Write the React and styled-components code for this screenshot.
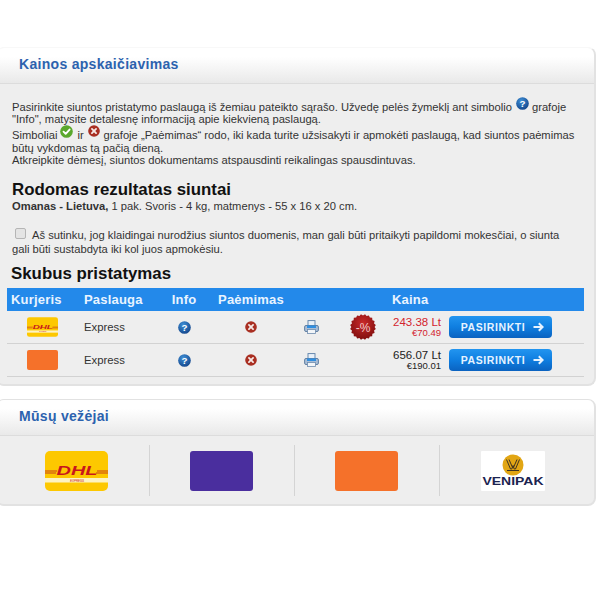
import React from "react";
import styled, { createGlobalStyle } from "styled-components";

const Global = createGlobalStyle`
  html, body { margin: 0; padding: 0; background: #fff; }
  body { font-family: "Liberation Sans", Arial, sans-serif; color: #333; }
`;

const Page = styled.div`
  width: 600px;
  height: 600px;
  overflow: hidden;
  padding-top: 47px;
  box-sizing: border-box;
  display: flex;
  flex-direction: column;
  gap: 13px;
`;

const Panel = styled.section`
  flex: none;
  width: 600px;
  margin-left: -4px;
  box-sizing: border-box;
  border: 1px solid ${p => (p.$faint ? "#f8f8f8" : "#e2e2e2")};
  border-right: 2px solid #e2e2e2;
  border-bottom: 2px solid #e2e2e2;
  border-radius: 8px;
  overflow: hidden;
  background: #eee;
`;

const PanelHeader = styled.header`
  height: 36px;
  box-sizing: border-box;
  padding: 0 0 4px 22px;
  display: flex;
  align-items: center;
  background: linear-gradient(to bottom, #fff 0%, #fff 25%, #e9e9e9 100%);
  border-bottom: 1px solid #dcdcdc;
`;

const PanelTitle = styled.h2`
  margin: 0;
  font-size: 14px;
  font-weight: bold;
  letter-spacing: 0.3px;
  color: #2c62ae;
`;

const Body = styled.div`
  padding: 15px 11px 7px 10px;
`;

const Intro = styled.div`
  padding-left: 5px;
  font-size: 11.2px;
`;

const IconLine = styled.div`
  height: ${p => p.$h}px;
  line-height: 12px;
  display: flex;
  align-items: flex-end;
  white-space: pre;
`;

const InlineIcon = styled.svg`
  display: inline-block;
  flex: none;
  width: ${p => p.$s}px;
  height: ${p => p.$s}px;
  margin: 0 ${p => p.$mr}px ${p => p.$up}px ${p => p.$ml}px;
`;

const ResultTitle = styled.h3`
  margin: ${p => p.$mt}px 0 0 ${p => p.$ml}px;
  font-size: 16.85px;
  line-height: 20px;
  font-weight: bold;
  color: #111;
`;

const Route = styled.p`
  margin: 0 0 0 5px;
  font-size: 11.2px;
  line-height: 13px;
  b { color: #333; }
`;

const Consent = styled.label`
  display: block;
  margin: 15px 0 0 5px;
  font-size: 11.2px;
  line-height: 13.5px;
`;

const Check = styled.span`
  display: inline-block;
  width: 9px;
  height: 9px;
  margin: 0 6px 0 3px;
  border: 1px solid #b5b5b5;
  border-radius: 2px;
  background: #e4e4e4;
`;

const Table = styled.div`
  margin: 4px 0 0 0;
  width: 577px;
`;

const columns = "70px 81px 52px 82px 38px 66px 47px 141px";

const HeadRow = styled.div`
  display: grid;
  grid-template-columns: ${columns};
  height: 23px;
  align-items: center;
  background: #2389ea;
  color: #e9f4ff;
  font-size: 13px;
  font-weight: bold;
  letter-spacing: 0.2px;
`;

const HeadCell = styled.div`
  grid-column: ${p => p.$col || "auto"};
  text-align: ${p => p.$align || "left"};
  padding-left: ${p => p.$pl || 0}px;
`;

const Row = styled.div`
  display: grid;
  grid-template-columns: ${columns};
  height: 33px;
  box-sizing: border-box;
  align-items: center;
  border-bottom: 1px solid #d2d2d2;
  font-size: 11.3px;
`;

const Center = styled.div`
  display: flex;
  justify-content: center;
  align-items: center;
`;

const Service = styled.div`
  padding-left: 7px;
  color: #333;
`;

const Price = styled.div`
  display: flex;
  flex-direction: column;
  align-items: flex-end;
  white-space: nowrap;
  margin-right: 2px;
  color: ${p => (p.$sale ? "#d3242f" : "#222")};
  font-size: 11.5px;
  line-height: 12px;
  small { font-size: 9.5px; line-height: 10px; }
`;

const PickButton = styled.button`
  margin-left: 6px;
  width: 103px;
  height: 22px;
  padding: 0 0 0 4px;
  border: 0;
  border-radius: 4px;
  background: linear-gradient(to bottom, #2295f0 0%, #0f7ee0 50%, #0a62c0 100%);
  color: #e6f3ff;
  font: bold 10.5px "Liberation Sans", Arial, sans-serif;
  letter-spacing: 0.6px;
  display: flex;
  align-items: center;
  justify-content: center;
  gap: 8px;
`;

const Carriers = styled.div`
  display: grid;
  grid-template-columns: repeat(4, 145px);
  padding: 9px 0 8px 8px;
`;

const Carrier = styled.div`
  height: 51px;
  box-sizing: border-box;
  display: flex;
  align-items: center;
  justify-content: center;
  padding-right: ${p => (p.$last ? 0 : 2)}px;
  border-right: ${p => (p.$last ? "0" : "1px solid #d4d4d4")};
`;

const Swatch = styled.div`
  width: ${p => p.$w}px;
  height: ${p => p.$h}px;
  border-radius: ${p => p.$r}px;
  background: ${p => p.$c};
`;

const Help = ({ s, ml, mr, up }) => (
  <InlineIcon $s={s} $ml={ml} $mr={mr} $up={up} viewBox="0 0 14 14">
    <defs>
      <radialGradient id="hb" cx="40%" cy="30%" r="80%">
        <stop offset="0" stopColor="#3f8fd6" />
        <stop offset="1" stopColor="#0f3f85" />
      </radialGradient>
    </defs>
    <circle cx="7" cy="7" r="6.8" fill="url(#hb)" />
    <text x="7" y="10.8" textAnchor="middle" fontSize="10.5" fontWeight="bold" fontFamily="Liberation Sans" fill="#fff">?</text>
  </InlineIcon>
);

const Cross = ({ s, ml, mr, up }) => (
  <InlineIcon $s={s} $ml={ml} $mr={mr} $up={up} viewBox="0 0 14 14">
    <circle cx="7" cy="7" r="6.8" fill="#a92f22" />
    <path d="M4.6 4.6 9.4 9.4M9.4 4.6 4.6 9.4" stroke="#f6e9e6" strokeWidth="2.1" strokeLinecap="round" />
  </InlineIcon>
);

const Tick = () => (
  <InlineIcon $s={13} $ml={3} $mr={4} $up={3} viewBox="0 0 14 14">
    <circle cx="7" cy="7" r="6.8" fill="#5aa82c" />
    <path d="M3.8 7.2 6.1 9.5 10.3 4.9" fill="none" stroke="#fff" strokeWidth="2" strokeLinecap="round" strokeLinejoin="round" />
  </InlineIcon>
);

const PrinterIcon = styled.svg`
  width: 15px;
  height: 14px;
`;

const Printer = () => (
  <PrinterIcon viewBox="0 0 15 14">
    <rect x="4" y="0.6" width="7" height="5.5" fill="#e8f0f8" stroke="#5b7fa8" strokeWidth="0.9" />
    <rect x="0.6" y="5.5" width="13.8" height="6" rx="1.4" fill="#a9bdd5" stroke="#56769c" strokeWidth="0.9" />
    <rect x="3" y="5.5" width="9" height="2.5" fill="#2f8ee0" />
    <rect x="3.5" y="9.5" width="8" height="4" fill="#f2f5f8" stroke="#6f8cae" strokeWidth="0.8" />
  </PrinterIcon>
);

const burst = (() => {
  const pts = [];
  for (let i = 0; i < 40; i++) {
    const r = i % 2 ? 13 : 11.6;
    const a = (i * Math.PI) / 20;
    pts.push(`${(13 + r * Math.cos(a)).toFixed(2)},${(13 + r * Math.sin(a)).toFixed(2)}`);
  }
  return pts.join(" ");
})();

const BadgeIcon = styled.svg`
  width: 26px;
  height: 26px;
`;

const Badge = () => (
  <BadgeIcon viewBox="0 0 26 26">
    <defs>
      <radialGradient id="bd" cx="50%" cy="35%" r="70%">
        <stop offset="0" stopColor="#c92a2a" />
        <stop offset="1" stopColor="#7a0b0b" />
      </radialGradient>
    </defs>
    <polygon points={burst} fill="url(#bd)" />
    <text x="13" y="17.5" textAnchor="middle" fontSize="12" fontFamily="Liberation Sans" fill="#f3c9c9">-%</text>
  </BadgeIcon>
);

const Arrow = () => (
  <svg width="11" height="10" viewBox="0 0 11 10">
    <path d="M0.5 5H9M5.8 1.2 9.6 5 5.8 8.8" fill="none" stroke="#e6f3ff" strokeWidth="2" />
  </svg>
);

const LogoSvg = styled.svg`
  display: block;
  width: ${p => p.$w}px;
  height: ${p => p.$h}px;
`;

const Dhl = ({ w, h }) => (
  <LogoSvg $w={w} $h={h} viewBox="0 0 63 40">
    <rect width="63" height="40" rx="5" fill="#fdc800" />
    <rect x="0" y="27" width="63" height="4.5" fill="#fdf3c2" />
    <path d="M0 19.5H12V20.5H0ZM0 21.5H11V22.5H0ZM52 19.5H63V20.5H52ZM51 21.5H63V22.5H51Z" fill="#c8401a" />
    <text x="32" y="24" textAnchor="middle" fontSize="12" fontWeight="bold" fontStyle="italic" textLength="41" lengthAdjust="spacingAndGlyphs" fontFamily="Liberation Sans" fill="#c8161d">DHL</text>
    <text x="32" y="30.6" textAnchor="middle" fontSize="3" fontStyle="italic" fontFamily="Liberation Sans" fill="#c8161d">EXPRESS</text>
  </LogoSvg>
);

const Venipak = () => (
  <LogoSvg $w={64} $h={40} viewBox="0 0 64 40">
    <rect width="64" height="40" rx="1" fill="#fff" />
    <circle cx="32" cy="14" r="10.5" fill="#e2a614" />
    <path d="M25.5 8.5 29.5 18H30.8L32 14.5 33.2 18H34.5L38.5 8.5M28 8.5 31.5 16.5M36 8.5 32.5 16.5" fill="none" stroke="#3f3320" strokeWidth="1" />
    <rect x="26" y="19" width="12" height="1" fill="#3f3320" />
    <text x="32" y="34" textAnchor="middle" fontSize="11" fontWeight="bold" textLength="61" lengthAdjust="spacingAndGlyphs" fontFamily="Liberation Sans" fill="#1c2350">VENIPAK</text>
  </LogoSvg>
);

const rows = [
  { logo: <Dhl w={31} h={20} />, sale: true, lt: "243.38 Lt", eur: "€70.49" },
  { logo: <Swatch $w={31} $h={20} $r={2} $c="#f5712a" />, sale: false, lt: "656.07 Lt", eur: "€190.01" },
];

export default function App() {
  return (
    <>
      <Global />
      <Page>
        <Panel $faint>
          <PanelHeader>
            <PanelTitle>Kainos apskaičiavimas</PanelTitle>
          </PanelHeader>
          <Body>
            <Intro>
              <IconLine $h={14}>Pasirinkite siuntos pristatymo paslaugą iš žemiau pateikto sąrašo. Užvedę pelės žymeklį ant simbolio<Help s={13} ml={4} mr={3} up={3} />grafoje</IconLine>
              <IconLine $h={12}>"Info", matysite detalesnę informaciją apie kiekvieną paslaugą.</IconLine>
              <IconLine $h={16}>Simboliai<Tick />ir<Cross s={12} ml={4} mr={4} up={4} />grafoje „Paėmimas“ rodo, iki kada turite užsisakyti ir apmokėti paslaugą, kad siuntos paėmimas</IconLine>
              <IconLine $h={13}>būtų vykdomas tą pačią dieną.</IconLine>
              <IconLine $h={12}>Atkreipkite dėmesį, siuntos dokumentams atspausdinti reikalingas spausdintuvas.</IconLine>
            </Intro>
            <ResultTitle $mt={14} $ml={5}>Rodomas rezultatas siuntai</ResultTitle>
            <Route><b>Omanas - Lietuva,</b> 1 pak. Svoris - 4 kg, matmenys - 55 x 16 x 20 cm.</Route>
            <Consent>
              <Check />Aš sutinku, jog klaidingai nurodžius siuntos duomenis, man gali būti pritaikyti papildomi mokesčiai, o siunta<br />
              gali būti sustabdyta iki kol juos apmokėsiu.
            </Consent>
            <ResultTitle $mt={8} $ml={4}>Skubus pristatymas</ResultTitle>
            <Table>
              <HeadRow>
                <HeadCell $pl={4}>Kurjeris</HeadCell>
                <HeadCell $pl={7}>Paslauga</HeadCell>
                <HeadCell $align="center">Info</HeadCell>
                <HeadCell $align="center">Paėmimas</HeadCell>
                <HeadCell $col="6 / 8" $pl={62}>Kaina</HeadCell>
              </HeadRow>
              {rows.map(r => (
                <Row key={r.lt}>
                  <Center>{r.logo}</Center>
                  <Service>Express</Service>
                  <Center><Help s={13} ml={0} mr={0} up={0} /></Center>
                  <Center><Cross s={12} ml={0} mr={0} up={0} /></Center>
                  <Center><Printer /></Center>
                  <Center>{r.sale ? <Badge /> : null}</Center>
                  <Price $sale={r.sale}>
                    <span>{r.lt}</span>
                    <small>{r.eur}</small>
                  </Price>
                  <PickButton>PASIRINKTI <Arrow /></PickButton>
                </Row>
              ))}
            </Table>
          </Body>
        </Panel>
        <Panel>
          <PanelHeader>
            <PanelTitle>Mūsų vežėjai</PanelTitle>
          </PanelHeader>
          <Carriers>
            <Carrier><Dhl w={63} h={40} /></Carrier>
            <Carrier><Swatch $w={63} $h={40} $r={3} $c="#4a2e9e" /></Carrier>
            <Carrier><Swatch $w={63} $h={40} $r={3} $c="#f5712a" /></Carrier>
            <Carrier $last><Venipak /></Carrier>
          </Carriers>
        </Panel>
      </Page>
    </>
  );
}
